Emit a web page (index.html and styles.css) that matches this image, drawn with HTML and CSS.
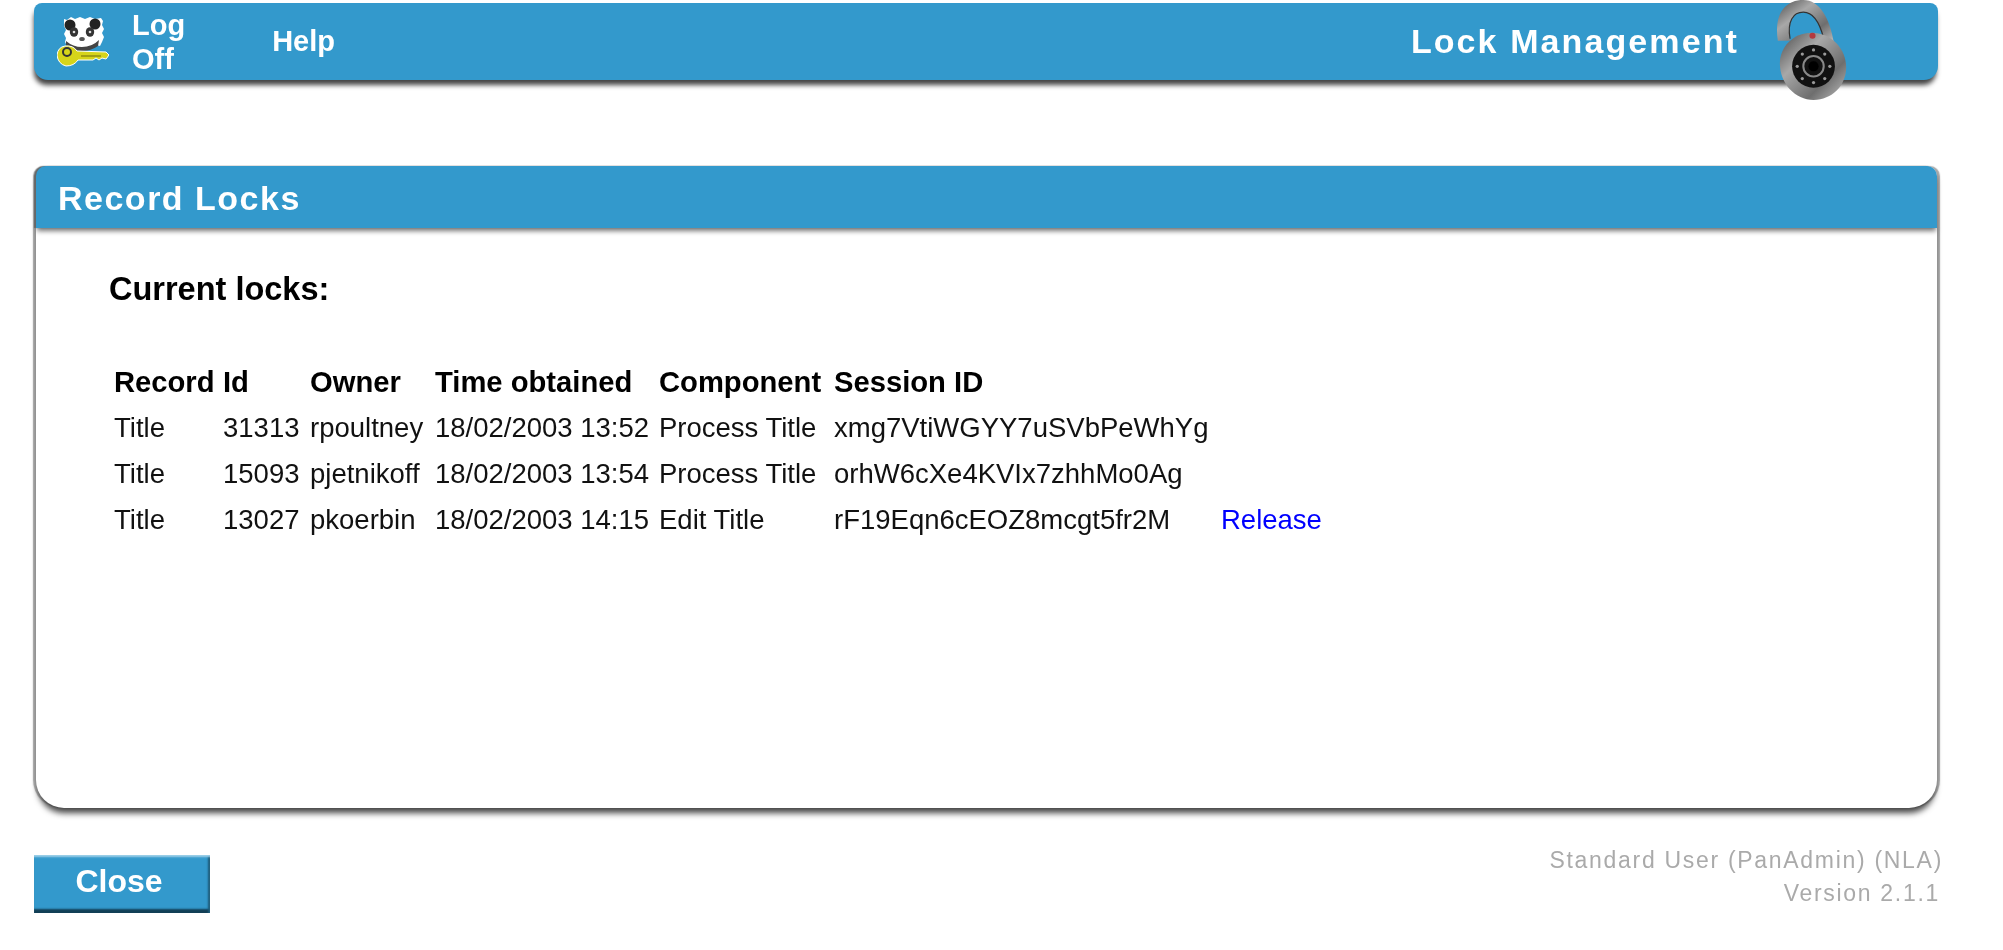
FILE: index.html
```html
<!DOCTYPE html>
<html lang="en">
<head>
  <meta charset="UTF-8">
  <title>Lock Management</title>
  <link rel="stylesheet" href="styles.css">
</head>
<body>
  <div class="page">
    <div class="topbar">
      <svg class="panda" viewBox="0 0 52 50" width="52" height="50">
        <path d="M7 2 l3 1 4 -3 4 2 5 -2 5 2 5 -2 5 2 6 -1 2 3 -1 4 2 4 -2 4 2 4 -2 5 -2 4 -4 -1 -3 3 -4 -1 -4 2 -5 -1 -5 1 -4 -3 -4 0 -2 -4 1 -4 -2 -4 2 -4 -2 -4z" fill="#fff"/>
        <circle cx="13" cy="8" r="5.5" fill="#222"/>
        <circle cx="38" cy="7" r="5.5" fill="#222"/>
        <path d="M9 24 q7 6 16 6 q10 0 17 -7 l-1 6 q-7 5 -16 5 q-10 0 -16 -5z" fill="#444"/>
        <ellipse cx="17" cy="15" rx="4.2" ry="4.8" fill="#333"/>
        <ellipse cx="33" cy="15" rx="4.2" ry="4.8" fill="#333"/>
        <circle cx="17" cy="15" r="1.3" fill="#ddd"/>
        <circle cx="33" cy="15" r="1.3" fill="#ddd"/>
        <ellipse cx="25" cy="22" rx="2.8" ry="2" fill="#555"/>
        <path d="M0 38 q1 -8 8 -9 q8 -1 12 5 l29 1 3 3 -3 4 -4 -1 -3 2 -3 -2 -3 2 -15 0 q-4 6 -12 6 q-8 -2 -9 -11z" fill="#d6d41a" stroke="#fff" stroke-width="1"/>
        <circle cx="10" cy="35" r="4" fill="none" stroke="#333" stroke-width="2"/>
        <path d="M24 39 H44" stroke="#8f8c10" stroke-width="1.5"/>
      </svg>
      <a class="top-link log-off" href="#">Log<br>Off</a>
      <a class="top-link" href="#">Help</a>
      <span class="top-title">Lock Management</span>
      <svg class="padlock" viewBox="0 0 74 102" width="77" height="104">
        <defs>
          <linearGradient id="steel" x1="0" y1="0" x2="1" y2="1">
            <stop offset="0" stop-color="#4a4a4a"/>
            <stop offset=".35" stop-color="#a8a8a8"/>
            <stop offset=".7" stop-color="#6e6e6e"/>
            <stop offset="1" stop-color="#c0c0c0"/>
          </linearGradient>
        </defs>
        <path fill-rule="evenodd" fill="url(#steel)" d="M3 40 C-1 14 10 0 28 0 C44 0 54 18 58 42 L48 42 C45 24 39 12 28 12 C18 12 12 22 15 40z"/>
        <path d="M15 38 C12 21 18 12 28 12 C38 12 44 22 48 38" fill="none" stroke="#333" stroke-width="1.2"/>
        <path d="M5 62 C5 46 18 32 36 32 C56 32 70 48 70 66 C70 84 56 98 38 98 C20 98 5 82 5 62z" fill="url(#steel)"/>
        <circle cx="37" cy="35" r="3" fill="#b33a3f"/>
        <circle cx="38" cy="65" r="21" fill="#111"/>
        <circle cx="38" cy="65" r="10" fill="none" stroke="#888" stroke-width="2"/>
        <circle cx="38" cy="65" r="5" fill="#000"/>
        <g fill="#999">
          <circle cx="38" cy="49" r="1.6"/><circle cx="49" cy="53" r="1.6"/><circle cx="54" cy="65" r="1.6"/>
          <circle cx="49" cy="77" r="1.6"/><circle cx="38" cy="81" r="1.6"/><circle cx="27" cy="77" r="1.6"/>
          <circle cx="22" cy="65" r="1.6"/><circle cx="27" cy="53" r="1.6"/>
        </g>
      </svg>
    </div>

    <div class="panel">
      <div class="panel-head">Record Locks</div>
      <div class="panel-body">
        <h2 class="locks-title">Current locks:</h2>
        <table class="locks">
          <thead>
            <tr>
              <th class="c-record">Record</th>
              <th class="c-id">Id</th>
              <th class="c-owner">Owner</th>
              <th class="c-time">Time obtained</th>
              <th class="c-comp">Component</th>
              <th class="c-session">Session ID</th>
              <th></th>
            </tr>
          </thead>
          <tbody>
            <tr>
              <td>Title</td>
              <td>31313</td>
              <td>rpoultney</td>
              <td>18/02/2003 13:52</td>
              <td>Process Title</td>
              <td>xmg7VtiWGYY7uSVbPeWhYg</td>
              <td></td>
            </tr>
            <tr>
              <td>Title</td>
              <td>15093</td>
              <td>pjetnikoff</td>
              <td>18/02/2003 13:54</td>
              <td>Process Title</td>
              <td>orhW6cXe4KVIx7zhhMo0Ag</td>
              <td></td>
            </tr>
            <tr>
              <td>Title</td>
              <td>13027</td>
              <td>pkoerbin</td>
              <td>18/02/2003 14:15</td>
              <td>Edit Title</td>
              <td>rF19Eqn6cEOZ8mcgt5fr2M</td>
              <td><a class="release" href="#">Release</a></td>
            </tr>
          </tbody>
        </table>
      </div>
    </div>

    <div class="bottom">
      <button class="close-btn">Close</button>
      <div class="user-info">Standard User (PanAdmin) (NLA)<br><span class="version">Version 2.1.1</span></div>
    </div>
  </div>
</body>
</html>
```

FILE: styles.css
```css
body {
  margin: 0;
  background: #fff;
  font-family: "Liberation Sans", Arial, sans-serif;
  color: #000;
}

.page {
  width: 1904px;
  margin-left: 34px;
  padding-top: 3px;
  filter: blur(0.7px);
}

.topbar {
  position: relative;
  display: flex;
  align-items: center;
  height: 77px;
  padding-left: 23px;
  background: #3399cc;
  border-radius: 8px 8px 14px 14px;
  box-shadow: -1px 6px 5px -1px #444;
  color: #fff;
}

.panda {
  flex: none;
}

.top-link {
  color: #fff;
  font-size: 29px;
  font-weight: bold;
  text-decoration: none;
}

.log-off {
  margin-left: 23px;
  line-height: 34px;
  margin-right: 87px;
}

.top-title {
  margin-left: auto;
  margin-right: 199px;
  font-size: 34px;
  font-weight: bold;
  letter-spacing: 2.1px;
}

.padlock {
  position: absolute;
  top: -3px;
  right: 87px;
}

.panel {
  margin: 86px 1px 0 2px;
  border-radius: 10px 10px 28px 28px;
  background: #fff;
  box-shadow: 0 7px 6px -2px #444, -3px 0 1px #aaa, 3px 0 1px #aaa;
}

.panel-head {
  height: 62px;
  padding-left: 22px;
  line-height: 64px;
  background: #3399cc;
  border-radius: 10px 10px 0 0;
  box-shadow: -2px 0 1px #666, 0 4px 5px -1px #777;
  color: #fff;
  font-size: 34px;
  font-weight: bold;
  letter-spacing: 1.5px;
}

.panel-body {
  height: 580px;
  padding-left: 73px;
}

.locks-title {
  margin: 0;
  padding-top: 42px;
  font-size: 32.5px;
  line-height: 38px;
  font-weight: bold;
}

.locks {
  margin-top: 51px;
  margin-left: 5px;
  border-collapse: collapse;
  table-layout: fixed;
  font-size: 27.5px;
  color: #111;
}

.locks th,
.locks td {
  height: 46px;
  padding: 0;
  text-align: left;
  white-space: nowrap;
}

.locks th {
  font-size: 29.2px;
  color: #000;
}

.c-record { width: 109px; }
.c-id { width: 87px; }
.c-owner { width: 125px; }
.c-time { width: 224px; }
.c-comp { width: 175px; }
.c-session { width: 387px; }

.release {
  color: #0000ff;
  text-decoration: none;
}

.bottom {
  display: flex;
  justify-content: space-between;
  margin-top: 47px;
}

.close-btn {
  width: 176px;
  height: 58px;
  padding: 0 6px 5px 0;
  border: 0;
  background: #3399cc;
  box-shadow: inset 0 3px 2px -1px #9fd0e8, inset -3px 0 2px -1px #1d5a78, inset 0 -5px 2px -1px #123f55;
  color: #fff;
  font-family: inherit;
  font-size: 32px;
  font-weight: bold;
}

.user-info {
  margin-right: -5px;
  margin-top: -11px;
  text-align: right;
  color: #aaa;
  font-size: 23px;
  line-height: 33px;
  letter-spacing: 1.7px;
}

.version {
  margin-right: 3px;
}
```
